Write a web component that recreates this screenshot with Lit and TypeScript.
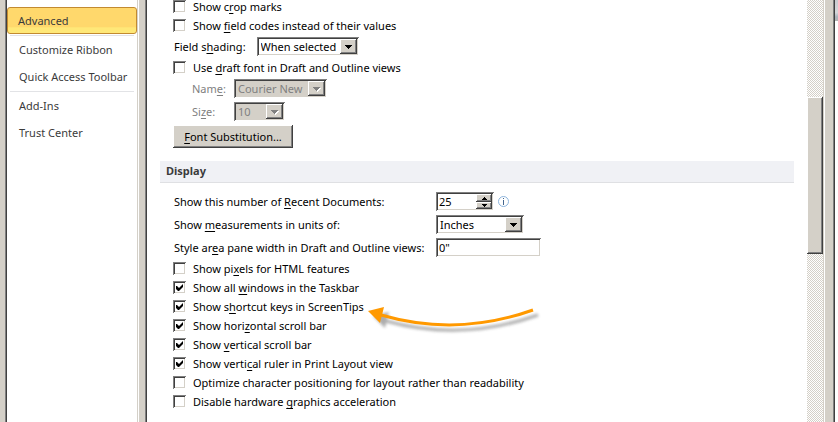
import { LitElement, html, css, svg, nothing, TemplateResult } from "lit";
import { customElement } from "lit/decorators.js";

/** Label text in which _x marks the access key letter. */
function keyed(text: string): TemplateResult {
  const i = text.indexOf("_");
  if (i < 0) return html`${text}`;
  return html`${text.slice(0, i)}<u>${text[i + 1]}</u>${text.slice(i + 2)}`;
}

const down = svg`<path d="M0 0h7v1H0zM1 1h5v1H1zM2 2h3v1H2zM3 3h1v1H3z" />`;

@customElement("app-root")
export class AppRoot extends LitElement {
  static styles = css`
    :host {
      display: block;
      height: 100vh;
      overflow: hidden;
      background: #fff;
      color: #000;
      font: 11px/19px "Noto Sans", "Open Sans", sans-serif;
      --face: #d4d0c8;
      --edge: #404040;
      --shade: #808080;
    }
    * { box-sizing: border-box; }
    u { text-decoration: underline; text-underline-offset: 2px; text-decoration-skip-ink: none; }
    input, select, button { font: inherit; color: inherit; margin: 0; border-radius: 0; outline: 0; }

    .window { display: flex; height: 100%; }
    .frame { flex: none; background: var(--face); border-right: 1px solid var(--edge); box-shadow: inset -1px 0 var(--shade); }
    .frame.left { width: 7px; }
    .frame.middle { width: 8px; }
    .frame.right { width: 10px; }
    .outside { flex: none; width: 3px; height: 21px; background: linear-gradient(#c9cbcf, #d5d7da 60%, #aab4bd 80%, #b4b4b4); }

    nav { flex: none; width: 131px; padding-top: 7px; border-right: 1px solid var(--face); margin-right: 1px; }
    nav a { display: block; height: 27px; padding-left: 11px; line-height: 25px; color: #3b3b3b; text-decoration: none; border: 1px solid transparent; }
    nav a.current { border-color: #c28a30; border-radius: 3px; background: linear-gradient(#ffd86c 0 74%, #ffe878 80%); padding-left: 10px; }
    nav hr { height: 1px; margin: 1px 3px 0; border: 0; background: #e2e3e6; }

    main { flex: 1; min-width: 0; padding: 0 13px; margin-top: -3px; }
    .group { padding-left: 13px; }
    .check { display: flex; align-items: center; gap: 7px; height: 19px; position: relative; }
    .check input { appearance: none; flex: none; width: 13px; height: 13px; background: #fff; }
    .sunken {
      box-shadow: inset 1px 1px var(--shade), inset -1px -1px #fff, inset 2px 2px var(--edge), inset -2px -2px var(--face);
    }
    .raised {
      background: var(--face);
      box-shadow: inset -1px -1px var(--edge), inset 1px 1px #fff, inset -2px -2px var(--shade);
    }
    .check input:checked::before {
      content: "";
      display: block;
      width: 7px;
      height: 7px;
      margin: 3px;
      background: #000;
      clip-path: polygon(0 2px, 1px 2px, 3px 4px, 7px 0, 7px 3px, 3px 7px, 2px 7px, 0 5px);
    }
    .field { display: flex; align-items: center; height: 19px; padding-left: 1px; }
    .field.inline { gap: 11px; margin: 2px 0; }
    .sub { margin: 2px 0 4px 19px; display: grid; grid-template-columns: 42px 1fr; row-gap: 4px; align-items: center; color: var(--shade); }
    .sub label { line-height: 19px; }

    .pick { position: relative; display: block; height: 19px; background: #fff; }
    .pick select { appearance: none; display: block; width: 100%; height: 19px; padding: 0 19px 0 4px; border: 0; background: transparent; line-height: 19px; opacity: 1; }
    .pick .drop { position: absolute; top: 2px; right: 2px; bottom: 2px; width: 17px; pointer-events: none; display: grid; place-items: center; }
    .pick svg { width: 7px; height: 4px; }
    .pick.off { background: var(--face); }
    .pick.off svg { fill: var(--shade); filter: drop-shadow(1px 1px #fff); }
    .w-wide { width: 102px; }
    .w-font { width: 93px; }
    .w-size { width: 51px; }
    .w-unit { width: 88px; }

    .push { display: block; height: 23px; width: 120px; padding: 0; border: 0; line-height: 23px; text-align: center; }
    h2 { margin: 13px 0 9px; height: 22px; padding-left: 6px; font-size: 11px; line-height: 19px; font-weight: 700; color: #3b3b3b; background: #f0f1f5; border-bottom: 1px solid #dfe0e3; }
    .settings { display: grid; grid-template-columns: 262px 1fr; row-gap: 4px; margin-bottom: 2px; padding-left: 1px; }
    .settings label { height: 19px; white-space: nowrap; }
    .spin { display: flex; width: 58px; height: 19px; padding: 2px; background: #fff; }
    .spin input { flex: 1; min-width: 0; width: 0; padding: 0 0 0 1px; border: 0; background: transparent; line-height: 15px; }
    .spin .steps { display: grid; grid-template-rows: 8px 7px; width: 16px; }
    .spin button { border: 0; padding: 0; display: grid; place-items: center; }
    .spin svg { width: 5px; height: 3px; }
    .with-info { display: flex; align-items: center; gap: 4px; }
    .with-info > svg { width: 11px; height: 11px; }
    .text { width: 105px; height: 19px; padding: 0 3px; border: 0; background: #fff; }
    .pointer { position: absolute; left: 188px; top: 0; width: 186px; height: 40px; pointer-events: none; overflow: visible; }

    .scroll { flex: none; width: 17px; margin-right: 1px; padding-top: 97px; border-right: 1px solid var(--face);
      background: conic-gradient(var(--face) 25%, #fff 0 50%, var(--face) 0 75%, #fff 0) 0 0 / 2px 2px; }
    .thumb { height: 157px; }
  `;

  private check(text: string, on = false, extra: unknown = nothing) {
    return html`<label class="check"><input class="sunken" type="checkbox" .checked=${on} /><span>${keyed(text)}</span>${extra}</label>`;
  }

  private pick(id: string, value: string, width: string, off = false) {
    return html`<span class="pick sunken ${width} ${off ? "off" : ""}">
      <select id=${id} ?disabled=${off}><option>${value}</option></select>
      <span class="drop raised"><svg viewBox="0 0 7 4" shape-rendering="crispEdges">${down}</svg></span>
    </span>`;
  }

  private arrow() {
    return html`<svg class="pointer" viewBox="0 0 186 40" aria-hidden="true">
      <defs><filter id="soft" x="-10%" y="-30%" width="120%" height="170%"><feGaussianBlur stdDeviation="1.4" /></filter></defs>
      <g transform="translate(5 5)" filter="url(#soft)" opacity="0.4" fill="#333" stroke="#333">
        <path d="M20 19 Q96 40 172 13" fill="none" stroke-width="3" />
        <path d="M7 14 L23 10 L19 26Z" stroke="none" />
      </g>
      <path d="M20 18 Q96 40 172 13" fill="none" stroke="#ff9900" stroke-width="3" />
      <path d="M7 14 L23 10 L19 26Z" fill="#ff9900" />
    </svg>`;
  }

  render() {
    return html`<div class="window">
      <div class="frame left"></div>
      <nav>
        <a class="current" href="#advanced">Advanced</a>
        <hr />
        <a href="#ribbon">Customize Ribbon</a>
        <a href="#toolbar">Quick Access Toolbar</a>
        <hr />
        <a href="#addins">Add-Ins</a>
        <a href="#trust">Trust Center</a>
      </nav>
      <div class="frame middle"></div>
      <main>
        <div class="group">
          ${this.check("Show c_rop marks")}
          ${this.check("Show _field codes instead of their values")}
          <div class="field inline"><label for="shading">${keyed("Field s_hading:")}</label>${this.pick("shading", "When selected", "w-wide")}</div>
          ${this.check("Use _draft font in Draft and Outline views")}
          <div class="sub">
            <label for="font">${keyed("Nam_e:")}</label>${this.pick("font", "Courier New", "w-font", true)}
            <label for="size">${keyed("Si_ze:")}</label>${this.pick("size", "10", "w-size", true)}
          </div>
          <button class="push raised" type="button">${keyed("_Font Substitution...")}</button>
        </div>
        <h2>Display</h2>
        <div class="group">
          <div class="settings">
            <label for="recent">${keyed("Show this number of _Recent Documents:")}</label>
            <div class="with-info">
              <div class="spin sunken">
                <input id="recent" type="text" inputmode="numeric" .value=${"25"} />
                <span class="steps">
                  <button class="raised" type="button" aria-label="More"><svg viewBox="0 0 5 3" shape-rendering="crispEdges"><path d="M2 0h1v1H2zM1 1h3v1H1zM0 2h5v1H0z" /></svg></button>
                  <button class="raised" type="button" aria-label="Fewer"><svg viewBox="0 0 5 3" shape-rendering="crispEdges"><path d="M0 0h5v1H0zM1 1h3v1H1zM2 2h1v1H2z" /></svg></button>
                </span>
              </div>
              <svg viewBox="0 0 11 11"><circle cx="5.5" cy="5.5" r="5" fill="#fff" stroke="#8db4dc" /><path d="M5 2h1v1H5zM5 4h1v5H5z" fill="#44678f" /></svg>
            </div>
            <label for="units">${keyed("Show _measurements in units of:")}</label>${this.pick("units", "Inches", "w-unit")}
            <label for="pane">${keyed("Style ar_ea pane width in Draft and Outline views:")}</label>
            <input id="pane" class="text sunken" type="text" .value=${'0"'} />
          </div>
          ${this.check("Show pi_xels for HTML features")}
          ${this.check("Show all _windows in the Taskbar", true)}
          ${this.check("Show s_hortcut keys in ScreenTips", true, this.arrow())}
          ${this.check("Show hori_zontal scroll bar", true)}
          ${this.check("Show _vertical scroll bar", true)}
          ${this.check("Show verti_cal ruler in Print Layout view", true)}
          ${this.check("Optimize character positioning for layout rather than readability")}
          ${this.check("Disable hardware _graphics acceleration")}
        </div>
      </main>
      <div class="scroll"><div class="thumb raised"></div></div>
      <div class="frame right"></div>
      <div class="outside"></div>
    </div>`;
  }
}
